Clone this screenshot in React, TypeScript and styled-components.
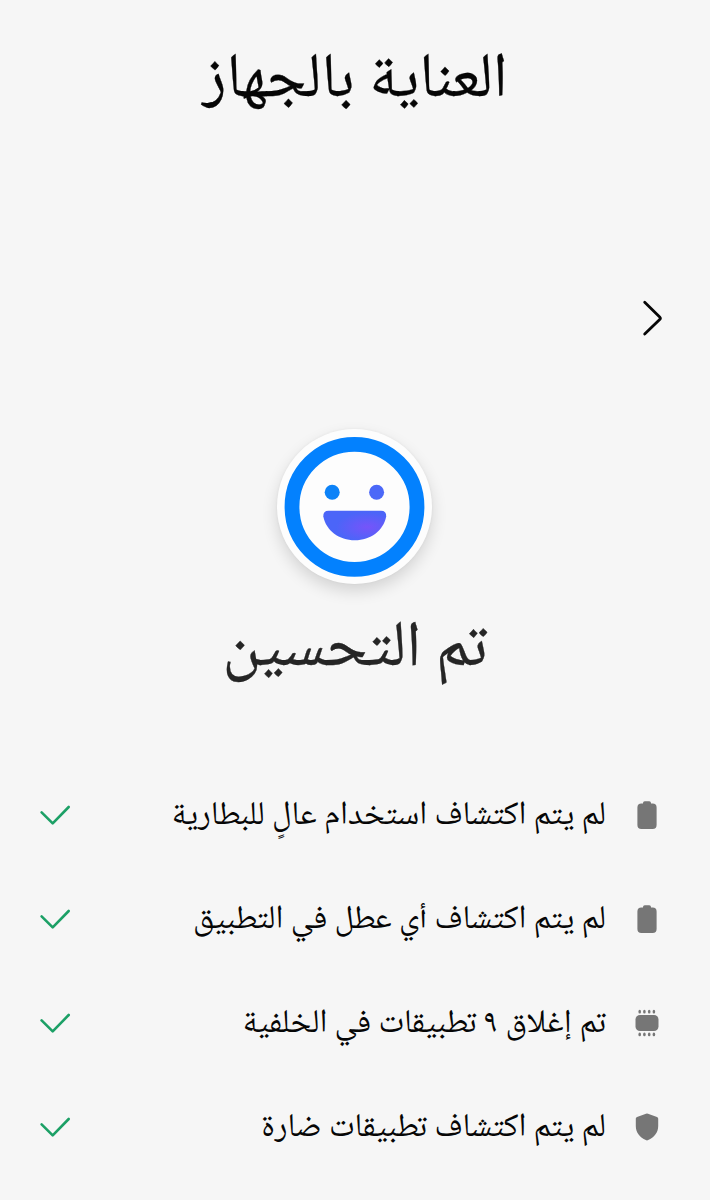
import React from "react";
import styled, { createGlobalStyle } from "styled-components";

const Global = createGlobalStyle`
  * { box-sizing: border-box; }
  body { margin: 0; background: #f6f6f6; font-family: "Noto Naskh Arabic UI", "Noto Naskh Arabic", "DejaVu Sans", sans-serif; }
  svg { display: block; flex: none; }
`;
const Screen = styled.main`
  width: 710px; height: 1200px; display: flex; flex-direction: column; overflow: hidden; color: #060606;
`;
const Title = styled.h1`
  margin: 0; height: 150px; padding-top: 5px; font-weight: 400; text-align: center; font-size: 62.800px; line-height: 150px;
  -webkit-text-stroke: 0.3px currentColor;
`;
const NextBar = styled.div`
  height: 136px; margin-top: 114px; padding: 36px 46px 0 0; display: flex; align-items: flex-start;
`;
const Face = styled.div`
  width: 155px; height: 155px; margin: 29px 278px 0 277px; border-radius: 50%; flex: none;
  background: #fdfdfd; box-shadow: 0 7px 16px rgba(0, 0, 0, 0.14), 0 0 3px rgba(0, 0, 0, 0.05);
`;
const Status = styled.h2`
  margin: 14px 0 0; height: 104px; font-weight: 400; text-align: center; font-size: 64.500px; line-height: 102px; color: #252525;
  -webkit-text-stroke: 0.3px currentColor;
`;
const List = styled.ul`
  margin: 61px 0 0; padding: 0; list-style: none;
`;
const Item = styled.li`
  height: 104px; padding: 0 49px 0 39px; display: flex; align-items: center;
`;
const Label = styled.span`
  flex: 1; margin-right: 27px; padding-top: 1px; font-size: 33.060px; line-height: 48px; white-space: nowrap;
`;

const Battery = () => (
  <svg width="28" height="30" viewBox="0 0 28 30" fill="#767676">
    <path d="M10 3.500V3.100Q10 1.300 11.800 1.300h4.400q1.800 0 1.800 1.800v.4h1.600q4 0 4 4V25q0 4-4 4H8.400q-4 0-4-4V7.500q0-4 4-4z" />
  </svg>
);
const Memory = () => (
  <svg width="28" height="30" viewBox="0 0 28 30" fill="#767676">
    <rect x="2.500" y="7" width="23" height="16" rx="4.500" />
    {[6.7, 11.4, 16.2, 20.9].map(x => (
      <React.Fragment key={x}>
        <ellipse cx={x} cy="3.700" rx="1.300" ry="1.900" />
        <ellipse cx={x} cy="26.400" rx="1.300" ry="1.900" />
      </React.Fragment>
    ))}
  </svg>
);
const Shield = () => (
  <svg width="28" height="30" viewBox="0 0 28 30" fill="#767676">
    <path d="M13 1.800q1-.4 2 0l9 3.100q1.200.5 1.200 1.700v7.300c0 7-4.200 11.200-10 14.200q-1.200.6-2.400 0C7 25.100 2.800 20.900 2.800 13.900V6.600q0-1.200 1.200-1.700z" />
  </svg>
);
const Check = () => (
  <svg width="32" height="24" viewBox="0 0 32 24" fill="none" stroke="#1ca066" strokeWidth="2.600" strokeLinecap="round" strokeLinejoin="round">
    <path d="M2.600 9.400 13.700 20.400 29.700 4" />
  </svg>
);

const items = [
  { text: "لم يتم اكتشاف استخدام عالٍ للبطارية", icon: <Battery /> },
  { text: "لم يتم اكتشاف أي عطل في التطبيق", icon: <Battery /> },
  { text: "تم إغلاق ٩ تطبيقات في الخلفية", icon: <Memory /> },
  { text: "لم يتم اكتشاف تطبيقات ضارة", icon: <Shield /> },
];

export default function App() {
  return (
    <Screen dir="rtl" lang="ar">
      <Global />
      <Title>العناية بالجهاز</Title>
      <NextBar>
        <svg width="24" height="36" viewBox="0 0 24 36" fill="none" stroke="#060606" strokeWidth="2.800" strokeLinecap="round" strokeLinejoin="round">
          <path d="M4.700 2.300 19.700 16.900Q21 18.200 19.700 19.500L4.700 34" />
        </svg>
      </NextBar>
      <Face>
        <svg width="155" height="155" viewBox="0 0 155 155">
          <defs>
            <radialGradient id="mouth" cx=".7" cy=".55" r=".5">
              <stop offset="0" stopColor="#7654fa" />
              <stop offset="1" stopColor="#4b65f8" />
            </radialGradient>
          </defs>
          <circle cx="77.500" cy="77.800" r="62.500" fill="none" stroke="#0381fe" strokeWidth="14.800" />
          <circle cx="55.200" cy="63.300" r="7.500" fill="#0c82f8" />
          <circle cx="99.600" cy="63.300" r="7.500" fill="#4b68f8" />
          <path d="M51.500 81.800H104Q109.500 81.800 109.200 87.500C106.500 101.500 93.500 111.300 77.800 111.300S49 101.500 46.300 87.500Q46 81.800 51.500 81.800z" fill="url(#mouth)" />
        </svg>
      </Face>
      <Status>تم التحسين</Status>
      <List>
        {items.map(({ text, icon }) => (
          <Item key={text}>
            {icon}
            <Label>{text}</Label>
            <Check />
          </Item>
        ))}
      </List>
    </Screen>
  );
}
